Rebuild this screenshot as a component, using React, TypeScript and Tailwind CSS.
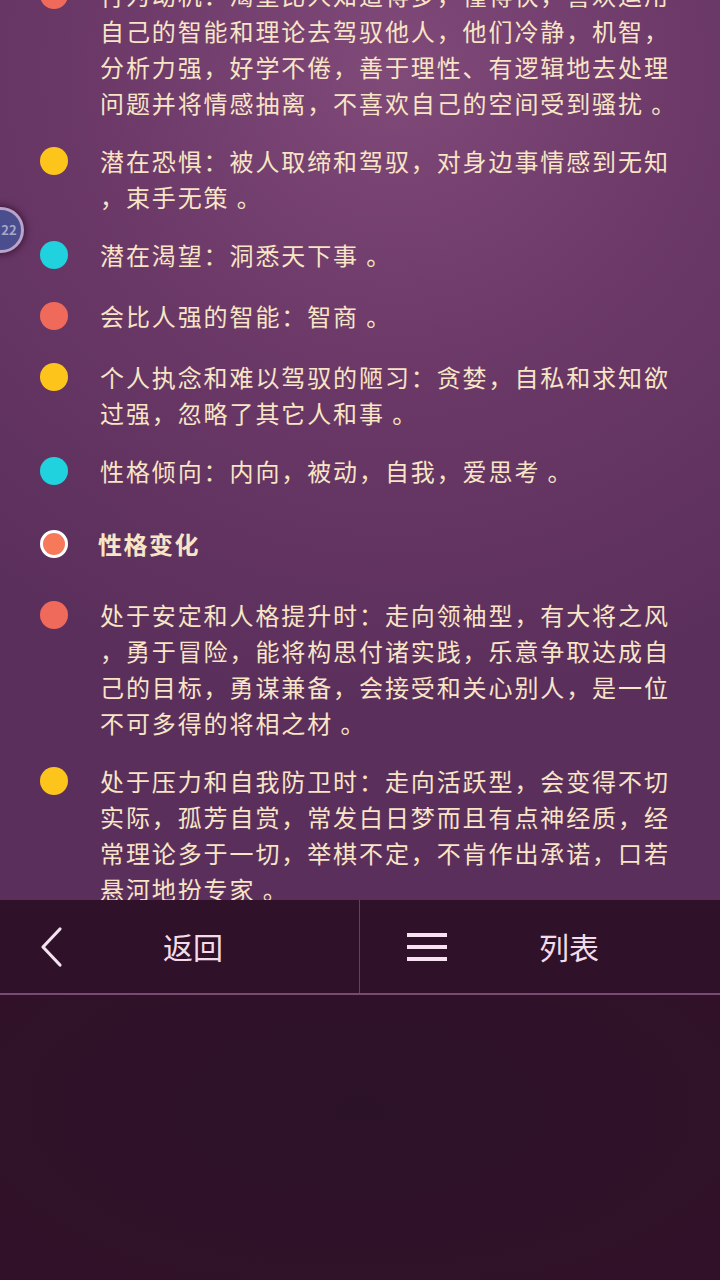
const CJK = '"Noto Sans CJK SC", "Noto Sans", sans-serif';

type Dot = 'red' | 'yellow' | 'cyan';

interface Item {
  dot: Dot;
  lines: string[];
  gap: string;
}

const dotClass: Record<Dot, string> = {
  red: 'bg-[#ef6a5b]',
  yellow: 'bg-[#fdc51c]',
  cyan: 'bg-[#1fd2de]',
};

const top: Item[] = [
  {
    dot: 'red',
    gap: 'mt-0',
    lines: [
      '行为动机：渴望比人知道得多，懂得快，喜欢运用',
      '自己的智能和理论去驾驭他人，他们冷静，机智，',
      '分析力强，好学不倦，善于理性、有逻辑地去处理',
      '问题并将情感抽离，不喜欢自己的空间受到骚扰 。',
    ],
  },
  {
    dot: 'yellow',
    gap: 'mt-[22px]',
    lines: ['潜在恐惧：被人取缔和驾驭，对身边事情感到无知', '，束手无策 。'],
  },
  { dot: 'cyan', gap: 'mt-[22px]', lines: ['潜在渴望：洞悉天下事 。'] },
  { dot: 'red', gap: 'mt-[25px]', lines: ['会比人强的智能：智商 。'] },
  {
    dot: 'yellow',
    gap: 'mt-[25px]',
    lines: ['个人执念和难以驾驭的陋习：贪婪，自私和求知欲', '过强，忽略了其它人和事 。'],
  },
  { dot: 'cyan', gap: 'mt-[22px]', lines: ['性格倾向：内向，被动，自我，爱思考 。'] },
];

const bottom: Item[] = [
  {
    dot: 'red',
    gap: 'mt-[35px]',
    lines: [
      '处于安定和人格提升时：走向领袖型，有大将之风',
      '，勇于冒险，能将构思付诸实践，乐意争取达成自',
      '己的目标，勇谋兼备，会接受和关心别人，是一位',
      '不可多得的将相之材 。',
    ],
  },
  {
    dot: 'yellow',
    gap: 'mt-[22px]',
    lines: [
      '处于压力和自我防卫时：走向活跃型，会变得不切',
      '实际，孤芳自赏，常发白日梦而且有点神经质，经',
      '常理论多于一切，举棋不定，不肯作出承诺，口若',
      '悬河地扮专家 。',
    ],
  },
];

function Row({ item }: { item: Item }) {
  return (
    <div className={`flex items-start pl-10 ${item.gap}`}>
      <span className={`mt-1 h-7 w-7 shrink-0 rounded-full ${dotClass[item.dot]}`} />
      <div className="ml-8 text-[24px] leading-[36px] tracking-[1.9px] text-[#f7e5c6]">
        {item.lines.map((l) => (
          <div key={l} className="whitespace-nowrap">
            {l}
          </div>
        ))}
      </div>
    </div>
  );
}

function Heading() {
  return (
    <div className="mt-[37px] flex items-center pl-10">
      <span className="h-7 w-7 shrink-0 rounded-full border-[3px] border-white bg-[#f6795a]" />
      <span className="ml-[30px] text-[24px] font-bold leading-[36px] tracking-[1.5px] text-[#f7e5c6]">
        性格变化
      </span>
    </div>
  );
}

export default function App() {
  return (
    <div className="flex h-[1280px] w-[720px] flex-col bg-[#2e1128]" style={{ fontFamily: CJK }}>
      <div className="relative h-[900px] overflow-hidden bg-[radial-gradient(ellipse_90%_70%_at_55%_8%,#804a79_0%,#6c3968_45%,#5b2f5c_100%)]">
        <div className="-mt-[23px]">
          {top.map((it, i) => (
            <Row key={i} item={it} />
          ))}
          <Heading />
          {bottom.map((it, i) => (
            <Row key={i} item={it} />
          ))}
        </div>
        {/* floating page badge, mostly off-screen */}
        <div className="absolute left-[-22px] top-[207px] flex h-[46px] w-[46px] items-center justify-center rounded-full border-[3px] border-[#bba3c9] bg-[#4a4e8e] shadow-[0_0_6px_2px_rgba(40,10,40,0.6)]">
          <span className="pl-[16px] text-[13px] font-bold text-[#a9a7c8]">22</span>
        </div>
      </div>

      <div className="flex h-[95px] border-b-2 border-[#7b4a72] bg-[#2f1229]">
        <div className="flex w-[360px] items-center border-r border-[#6a3e63] pl-[38px]">
          <svg width="28" height="42" viewBox="0 0 28 42" fill="none">
            <path d="M22 3 L5 21 L22 39" stroke="#f3e3ee" strokeWidth="3.2" strokeLinecap="round" strokeLinejoin="round" />
          </svg>
          <span className="ml-[97px] text-[30px] text-[#f3dcea]">返回</span>
        </div>
        <div className="flex flex-1 items-center pl-[46px]">
          <svg width="42" height="30" viewBox="0 0 42 30">
            <rect x="1" y="1" width="40" height="4" fill="#f8e1f0" />
            <rect x="1" y="13" width="40" height="4" fill="#f8e1f0" />
            <rect x="1" y="25" width="40" height="4" fill="#f8e1f0" />
          </svg>
          <span className="ml-[91px] text-[30px] text-[#f3dcea]">列表</span>
        </div>
      </div>

      <div className="flex-1 bg-[radial-gradient(ellipse_at_50%_40%,#2c1228_0%,#311129_100%)]" />
    </div>
  );
}
